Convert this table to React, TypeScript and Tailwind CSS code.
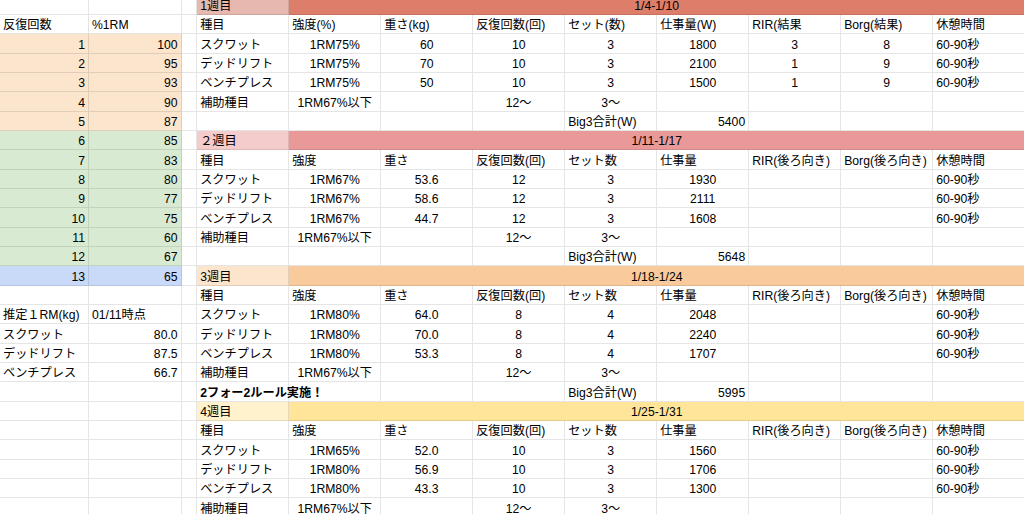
import React from "react";

type Align = "l" | "c" | "r";

const Cell = ({
  children,
  a = "l",
  bg = "",
  wide = false,
  bold = false,
}: {
  children?: React.ReactNode;
  a?: Align;
  bg?: string;
  wide?: boolean;
  bold?: boolean;
}) => {
  const align = a === "r" ? "justify-end" : a === "c" ? "justify-center" : "justify-start";
  return (
    <div
      className={`flex items-end whitespace-nowrap px-[3px] pb-[1px] leading-[14px] border-r border-b border-black/10 ${align} ${bg} ${
        wide ? "col-span-8" : ""
      } ${bold ? "font-bold" : ""}`}
    >
      {children}
    </div>
  );
};

const head1 = ["種目", "強度(%)", "重さ(kg)", "反復回数(回)", "セット(数)", "仕事量(W)", "RIR(結果", "Borg(結果)", "休憩時間"];
const head2 = ["種目", "強度", "重さ", "反復回数(回)", "セット数", "仕事量", "RIR(後ろ向き)", "Borg(後ろ向き)", "休憩時間"];
const lifts = ["スクワット", "デッドリフト", "ベンチプレス"];

const weeks = [
  {
    label: "1週目",
    labelBg: "bg-[#e6b8af]",
    barBg: "bg-[#dd7e6b]",
    dates: "1/4-1/10",
    head: head1,
    rows: [
      ["1RM75%", "60", "10", "3", "1800", "3", "8"],
      ["1RM75%", "70", "10", "3", "2100", "1", "9"],
      ["1RM75%", "50", "10", "3", "1500", "1", "9"],
    ],
    total: "5400",
    note: "",
  },
  {
    label: "２週目",
    labelBg: "bg-[#f4cccc]",
    barBg: "bg-[#ea9999]",
    dates: "1/11-1/17",
    head: head2,
    rows: [
      ["1RM67%", "53.6", "12", "3", "1930", "", ""],
      ["1RM67%", "58.6", "12", "3", "2111", "", ""],
      ["1RM67%", "44.7", "12", "3", "1608", "", ""],
    ],
    total: "5648",
    note: "",
  },
  {
    label: "3週目",
    labelBg: "bg-[#fce5cd]",
    barBg: "bg-[#f9cb9c]",
    dates: "1/18-1/24",
    head: head2,
    rows: [
      ["1RM80%", "64.0", "8", "4", "2048", "", ""],
      ["1RM80%", "70.0", "8", "4", "2240", "", ""],
      ["1RM80%", "53.3", "8", "4", "1707", "", ""],
    ],
    total: "5995",
    note: "2フォー2ルール実施！",
  },
  {
    label: "4週目",
    labelBg: "bg-[#fff2cc]",
    barBg: "bg-[#ffe599]",
    dates: "1/25-1/31",
    head: head2,
    rows: [
      ["1RM65%", "52.0", "10", "3", "1560", "", ""],
      ["1RM80%", "56.9", "10", "3", "1706", "", ""],
      ["1RM80%", "43.3", "10", "3", "1300", "", ""],
    ],
    total: "",
    note: "",
  },
];

// right block: columns D..L, 7 rows per week
const rightRows: React.ReactNode[][] = [];
weeks.forEach((w) => {
  rightRows.push([
    <Cell bg={w.labelBg}>{w.label}</Cell>,
    <Cell a="c" bg={w.barBg} wide>
      {w.dates}
    </Cell>,
  ]);
  rightRows.push(w.head.map((h) => <Cell>{h}</Cell>));
  w.rows.forEach((r, i) => {
    rightRows.push([
      <Cell>{lifts[i]}</Cell>,
      <Cell a="c">{r[0]}</Cell>,
      <Cell a="c">{r[1]}</Cell>,
      <Cell a="c">{r[2]}</Cell>,
      <Cell a="c">{r[3]}</Cell>,
      <Cell a="c">{r[4]}</Cell>,
      <Cell a="c">{r[5]}</Cell>,
      <Cell a="c">{r[6]}</Cell>,
      <Cell>60-90秒</Cell>,
    ]);
  });
  rightRows.push([
    <Cell>補助種目</Cell>,
    <Cell a="c">1RM67%以下</Cell>,
    <Cell />,
    <Cell a="c">12〜</Cell>,
    <Cell a="c">3〜</Cell>,
    <Cell />,
    <Cell />,
    <Cell />,
    <Cell />,
  ]);
  rightRows.push([
    <Cell bold>{w.note}</Cell>,
    <Cell />,
    <Cell />,
    <Cell />,
    <Cell>Big3合計(W)</Cell>,
    <Cell a="r">{w.total}</Cell>,
    <Cell />,
    <Cell />,
    <Cell />,
  ]);
});

const pct = [100, 95, 93, 90, 87, 85, 83, 80, 77, 75, 60, 67, 65];
const leftRows: React.ReactNode[][] = [];
for (let r = 0; r < rightRows.length; r++) {
  if (r === 1) {
    leftRows.push([<Cell>反復回数</Cell>, <Cell>%1RM</Cell>]);
  } else if (r >= 2 && r <= 14) {
    const n = r - 1;
    const bg = n <= 5 ? "bg-[#fce5cd]" : n <= 12 ? "bg-[#d9ead3]" : "bg-[#c9daf8]";
    leftRows.push([
      <Cell a="r" bg={bg}>{n}</Cell>,
      <Cell a="r" bg={bg}>{pct[n - 1]}</Cell>,
    ]);
  } else if (r === 16) {
    leftRows.push([<Cell>推定１RM(kg)</Cell>, <Cell>01/11時点</Cell>]);
  } else if (r === 17) {
    leftRows.push([<Cell>スクワット</Cell>, <Cell a="r">80.0</Cell>]);
  } else if (r === 18) {
    leftRows.push([<Cell>デッドリフト</Cell>, <Cell a="r">87.5</Cell>]);
  } else if (r === 19) {
    leftRows.push([<Cell>ベンチプレス</Cell>, <Cell a="r">66.7</Cell>]);
  } else {
    leftRows.push([<Cell />, <Cell />]);
  }
}

const App = () => {
  return (
    <div className="w-[1024px] h-[514px] overflow-hidden bg-white text-black text-[12.2px] font-[Liberation_Sans,Noto_Sans_CJK_JP,sans-serif]">
      <div className="-mt-[4.3px] grid grid-cols-[89px_92.6px_15.6px_repeat(9,92px)] auto-rows-[19.33px]">
        {rightRows.map((row, r) => (
          <React.Fragment key={r}>
            {leftRows[r].map((c, i) => (
              <React.Fragment key={"l" + i}>{c}</React.Fragment>
            ))}
            <Cell />
            {row.map((c, i) => (
              <React.Fragment key={"r" + i}>{c}</React.Fragment>
            ))}
          </React.Fragment>
        ))}
      </div>
    </div>
  );
};

export default App;
